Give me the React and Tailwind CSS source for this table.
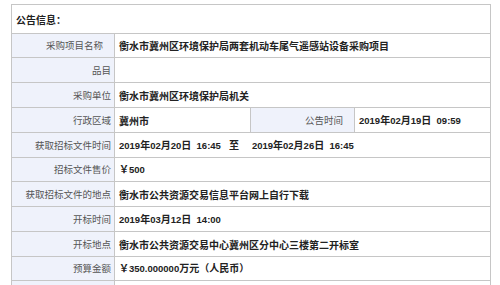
function Mixed({ text }) {
  const parts = text.split(/([\x20-\x7e]+)/).filter((p) => p.length > 0);
  return (
    <>
      {parts.map((p, i) =>
        /^[\x20-\x7e]+$/.test(p) ? (
          <span key={i} className="text-[9.5px]" style={{ fontFamily: '"Liberation Sans", Arial, sans-serif' }}>
            {p}
          </span>
        ) : (
          <span key={i}>{p}</span>
        )
      )}
    </>
  );
}

export default function App() {
  const font = { fontFamily: '"Noto Sans CJK SC", "Noto Sans", sans-serif' };
  const Label = ({ children, className = "" }) => (
    <div className={`flex items-center justify-end bg-[#eff2fb] border-r border-[#c6c6c6] pr-[3px] text-[9.5px] text-[#555] ${className}`}>
      {children}
    </div>
  );
  const Value = ({ children, className = "" }) => (
    <div className={`flex items-center pl-[4px] text-[10px] font-bold text-[#222] whitespace-pre ${className}`}>
      <span>{children}</span>
    </div>
  );
  const Row = ({ h, children }) => (
    <div className={`grid grid-cols-[103px_1fr] border-b border-[#c6c6c6] ${h}`}>{children}</div>
  );
  return (
    <div className="w-[500px] h-[285px] overflow-hidden bg-white" style={font}>
      <div className="ml-[11px] mt-[4px] w-[480px] border-l border-r border-t border-[#c6c6c6]">
        <div className="h-[29px] border-b border-[#c6c6c6] flex items-center pl-[4px] text-[10px] font-bold text-[#222]">
          公告信息：
        </div>
        <Row h="h-[24px]">
          <Label className="pr-[11px]">采购项目名称</Label>
          <Value>衡水市冀州区环境保护局两套机动车尾气遥感站设备采购项目</Value>
        </Row>
        <Row h="h-[25px]">
          <Label>品目</Label>
          <Value></Value>
        </Row>
        <Row h="h-[25px]">
          <Label>采购单位</Label>
          <Value>衡水市冀州区环境保护局机关</Value>
        </Row>
        <div className="grid grid-cols-[103px_136px_104px_1fr] border-b border-[#c6c6c6] h-[25px]">
          <Label>行政区域</Label>
          <Value className="border-r border-[#c6c6c6]">冀州市</Value>
          <Label className="pr-[11px]">公告时间</Label>
          <Value><Mixed text="2019年02月19日  09:59" /></Value>
        </div>
        <Row h="h-[25px]">
          <Label>获取招标文件时间</Label>
          <Value>
            <Mixed text="2019年02月20日  16:45" />
            <span className="ml-[8px]">至</span>
            <span className="ml-[13px]"><Mixed text="2019年02月26日  16:45" /></span>
          </Value>
        </Row>
        <Row h="h-[24px]">
          <Label>招标文件售价</Label>
          <Value><Mixed text="￥500" /></Value>
        </Row>
        <Row h="h-[25px]">
          <Label>获取招标文件的地点</Label>
          <Value>衡水市公共资源交易信息平台网上自行下载</Value>
        </Row>
        <Row h="h-[25px]">
          <Label>开标时间</Label>
          <Value><Mixed text="2019年03月12日  14:00" /></Value>
        </Row>
        <Row h="h-[25px]">
          <Label>开标地点</Label>
          <Value>衡水市公共资源交易中心冀州区分中心三楼第二开标室</Value>
        </Row>
        <Row h="h-[24px]">
          <Label>预算金额</Label>
          <Value><Mixed text="￥350.000000万元（人民币）" /></Value>
        </Row>
        <Row h="h-[25px]">
          <Label></Label>
          <Value></Value>
        </Row>
      </div>
    </div>
  );
}
